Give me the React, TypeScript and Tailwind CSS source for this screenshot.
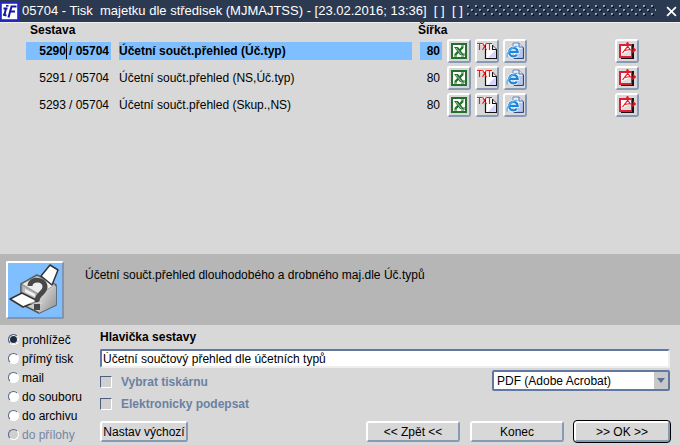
import React, { useState } from 'react';

const reports = [
  { id: '5290', group: '05704', name: 'Účetní součt.přehled (Úč.typ)', width: 80 },
  { id: '5291', group: '05704', name: 'Účetní součt.přehled (NS,Úč.typ)', width: 80 },
  { id: '5293', group: '05704', name: 'Účetní součt.přehled (Skup.,NS)', width: 80 },
];

const outputs = [
  { value: 'prohlizec', label: 'prohlížeč' },
  { value: 'tisk', label: 'přímý tisk' },
  { value: 'mail', label: 'mail' },
  { value: 'soubor', label: 'do souboru' },
  { value: 'archiv', label: 'do archivu' },
  { value: 'priloha', label: 'do přílohy', disabled: true },
];

const options = [
  { id: 'vybrat', label: 'Vybrat tiskárnu' },
  { id: 'podepsat', label: 'Elektronicky podepsat' },
];

const ExcelIcon = () => (
  <svg viewBox="0 0 16 16" className="h-4 w-4" aria-hidden="true">
    <rect x="1" y="1" width="14" height="14" fill="#fff" stroke="#22702b" strokeWidth="2" />
    <path d="M3 4h4l6 8H9z" fill="#22702b" />
    <path d="M12 4L4 12" stroke="#22702b" strokeWidth="2.400" />
    <path d="M5 5l5.500 6.500" stroke="#cfe6d0" strokeWidth=".8" />
    <path d="M10 13h3v-3M3 13h3M10 3h3" fill="none" stroke="#22702b" />
  </svg>
);

const TextIcon = () => (
  <svg viewBox="0 0 20 18" className="h-[18px] w-[20px]" aria-hidden="true">
    <path d="M8.500 3.500h7l4 4v9h-11z" fill="#fff" stroke="#111" strokeWidth="1.200" />
    <path d="M11 15.800L18.500 8v7.800z" fill="#d5d3fa" />
    <path d="M15.500 3.500v4h4" fill="#fff" stroke="#111" strokeWidth="1.200" />
    <path d="M0 1h15v7H9V3H0z" fill="#f4f4f4" />
    <path d="M0 1.500h5M2.500 1.500V8M5.500 1l4 7M9.500 1l-4 7M10 1.500h5M12.500 1.500V8" fill="none" stroke="#f71414" strokeWidth="1.100" />
  </svg>
);

const BrowserIcon = () => (
  <svg viewBox="0 0 18 18" className="h-[18px] w-[18px]" aria-hidden="true">
    <path d="M7 1h6l4 4v11H7z" fill="#e9effc" stroke="#6f88bd" />
    <path d="M11 7h5v8h-7z" fill="#b2c7f2" />
    <path d="M13 1v4h4" fill="#dfe8fa" stroke="#526b9c" />
    <path d="M17.500 5.500v11H8" fill="none" stroke="#33477c" />
    <path d="M3.500 9.800h8.200A4.300 4.300 0 1 0 10.800 12.800" fill="none" stroke="#fff" strokeWidth="3.600" />
    <path d="M3.500 9.800h8.200A4.300 4.300 0 1 0 10.800 12.800" fill="none" stroke="#1d86d8" strokeWidth="2.200" />
    <path d="M1.500 15.500C-1 12 7 3.500 11.500 4.500" fill="none" stroke="#59b3ef" strokeWidth="1.300" />
  </svg>
);

const PdfIcon = () => (
  <svg viewBox="0 0 18 18" className="h-[18px] w-[18px]" aria-hidden="true">
    <path d="M3 2h13v15H3z" fill="#1a1114" />
    <path d="M1 2h13v14H1z" fill="#dc2038" />
    <path d="M3 4h10v10H3z" fill="#dedede" />
    <path d="M3 4h10v4L3 13z" fill="#fff" />
    <path d="M9.500 0v4.500L4.500 11M9.500 4l3 4h5M15 5.500L17.500 8 14 10.500M6.500 8.500l6-1" fill="none" stroke="#f01824" strokeWidth="1.200" />
    <circle cx="9.500" cy="1.500" r="1.200" fill="#f01824" />
  </svg>
);

const PrinterIcon = () => (
  <svg viewBox="0 0 54 54" className="h-[54px] w-[54px]" aria-hidden="true">
    <defs>
      <linearGradient id="printerSide" x1="0" y1="0" x2="1" y2="1">
        <stop offset="0" stopColor="#e9e9e9" />
        <stop offset="1" stopColor="#8c8c8c" />
      </linearGradient>
    </defs>
    <path d="M13 21L29 12l19 10v20L31 50 13 41z" fill="#cdcdcd" stroke="#555" strokeWidth="1.500" strokeLinejoin="round" />
    <path d="M31 32l17-9v19L31 50z" fill="url(#printerSide)" />
    <path d="M14 21l15-8 18 9-16 9z" fill="#ededed" stroke="#8a8a8a" strokeWidth=".7" />
    <path d="M33 13l9-11 8 5-6 15z" fill="#fff" stroke="#333" strokeWidth="1.500" strokeLinejoin="round" />
    <path d="M14 22l17 10v9l-17-9z" fill="#bcbcbc" stroke="#888" strokeWidth=".7" />
    <path d="M17 26l10 5v3l-10-5z" fill="#f2f2f2" />
    <path d="M2 36l12-6 16 8-15 6z" fill="#fff" stroke="#333" strokeWidth="1.500" strokeLinejoin="round" />
    <path d="M22 23c0-8 15-8 15 1 0 6-8 7-8 14" fill="none" stroke="#484848" strokeWidth="5" />
    <path d="M29 41v6" stroke="#484848" strokeWidth="6" />
    <path d="M22 40h12" stroke="#ddd" />
  </svg>
);

const LogoIcon = () => (
  <svg viewBox="0 0 19 19" className="h-[19px] w-[19px] shrink-0" aria-hidden="true">
    <rect x="1" y="1" width="17" height="17" fill="#fff" stroke="#2424e0" strokeWidth="1.600" />
    <path d="M6 6L4.500 13M3.500 6.500h4M8.500 15.500l3-11h5M10.500 9.500h4.500M3 12.500l3.500 1" fill="none" stroke="#1515a8" strokeWidth="2" />
    <path d="M6 3.800h2.500" stroke="#1515a8" strokeWidth="1.600" />
  </svg>
);

const raised = 'rounded-[3px] border-2 border-t-white border-l-white border-r-[#8799b3] border-b-[#8799b3] bg-[#d8d8d8]';

const IconButton = ({ label, children }: { label: string; children: React.ReactNode }) => (
  <button type="button" aria-label={label} className={`${raised} flex h-6 w-6 items-center justify-center`}>
    {children}
  </button>
);

const App: React.FC = () => {
  const [selected, setSelected] = useState('5290');
  const [output, setOutput] = useState('prohlizec');

  return (
    <main className="flex min-h-screen flex-col bg-[#d8d8d8] font-['Liberation_Sans',Arial,sans-serif] text-[12px] leading-4 text-black">
      <header className="flex h-[22px] items-center bg-[#2b3a50] text-white">
        <LogoIcon />
        <h1 className="ml-[3px] text-[13px] whitespace-pre">05704 - Tisk  majetku dle středisek (MJMAJTSS) - [23.02.2016; 13:36]  [ ]  [ ]</h1>
        <svg className="mr-1.5 ml-1 h-3 min-w-0 flex-1" aria-hidden="true">
          <defs>
            <pattern id="bumps" width="8" height="8" patternUnits="userSpaceOnUse">
              <path d="M0 0h2v2H0zM4 4h2v2H4z" fill="#9dabbc" />
              <path d="M1 1h2v2H1zM5 5h2v2H5z" fill="#0d1522" />
              <path d="M1 1h1v1H1zM5 5h1v1H5z" fill="#6a7a8f" />
            </pattern>
          </defs>
          <rect width="100%" height="12" fill="url(#bumps)" />
        </svg>
        <button type="button" aria-label="Zavřít" className="flex h-5 w-[18px] items-center justify-center">
          <svg viewBox="0 0 10 10" className="h-[11px] w-[11px]" aria-hidden="true">
            <path d="M1 1l8 8M9 1L1 9" stroke="#fff" strokeWidth="1.600" />
          </svg>
        </button>
      </header>

      <section className="min-h-[120px] flex-1 border-t border-[#f0f0f0]">
        <table className="w-full table-fixed border-collapse">
          <colgroup>
            <col className="w-[111px]" />
            <col />
            <col className="w-[30px]" />
            <col className="w-[29px]" />
            <col className="w-7" />
            <col className="w-7" />
            <col className="w-[153px]" />
          </colgroup>
          <thead>
            <tr className="text-left leading-[13px]">
              <th className="p-0 pt-px pl-[30px]">Sestava</th>
              <th className="p-0" />
              <th className="p-0 pt-px pl-1.5 whitespace-nowrap" colSpan={2}>Šířka</th>
              <th className="p-0" colSpan={3} />
            </tr>
          </thead>
          <tbody>
            {reports.map((report) => {
              const active = report.id === selected;
              const cell = active ? 'flex h-[18px] items-center bg-[#80bfff] font-bold' : 'flex h-[18px] items-center';
              return (
                <tr key={report.id} className="h-[27px]" onClick={() => setSelected(report.id)}>
                  <td className="p-0 pl-[26px]">
                    <div className={`${cell} justify-end gap-0.5 pr-0.5`}>
                      <span className={active ? 'border-r border-black' : 'border-r border-transparent'}>{report.id}</span>
                      <span>/ {report.group}</span>
                    </div>
                  </td>
                  <td className="p-0 pl-2">
                    <div className={cell}>{report.name}</div>
                  </td>
                  <td className="p-0 pl-2">
                    <div className={`${cell} justify-end pr-0.5`}>{report.width}</div>
                  </td>
                  <td className="p-0 pl-[5px]">
                    <IconButton label="Excel"><ExcelIcon /></IconButton>
                  </td>
                  <td className="p-0 pl-1">
                    <IconButton label="Text"><TextIcon /></IconButton>
                  </td>
                  <td className="p-0 pl-1">
                    <IconButton label="Prohlížeč"><BrowserIcon /></IconButton>
                  </td>
                  <td className="p-0 pl-[88px]">
                    <IconButton label="PDF"><PdfIcon /></IconButton>
                  </td>
                </tr>
              );
            })}
          </tbody>
        </table>
      </section>

      <section className="flex items-start gap-[21px] bg-[#b6b6b6] px-1.5 pt-[7px] pb-1.5">
        <div className="rounded-[2px] border-2 border-t-white border-l-white border-r-[#8294ae] border-b-[#8294ae] bg-[#80bfff]">
          <PrinterIcon />
        </div>
        <p className="pt-1.5">Účetní součt.přehled dlouhodobého a drobného maj.dle Úč.typů</p>
      </section>

      <form className="flex pt-1 pr-2.5 pb-px" onSubmit={(e) => e.preventDefault()}>
        <fieldset className="w-[100px] shrink-0 pt-px pl-2">
          {outputs.map((item) => (
            <label
              key={item.value}
              className={item.disabled ? 'flex h-[19px] items-center gap-[3px] text-[#7587a3]' : 'flex h-[19px] items-center gap-[3px]'}
            >
              <input
                type="radio"
                name="output"
                value={item.value}
                disabled={item.disabled}
                checked={output === item.value}
                onChange={() => setOutput(item.value)}
                className="h-[11px] w-[11px] appearance-none rounded-full border border-t-[#56677f] border-l-[#56677f] border-r-white border-b-white bg-white checked:bg-[#1c2c42] checked:shadow-[inset_0_0_0_1px_white] disabled:bg-[#d0d0d0]"
              />
              {item.label}
            </label>
          ))}
        </fieldset>

        <div className="min-w-0 flex-1">
          <label htmlFor="heading" className="block h-5 font-bold">Hlavička sestavy</label>
          <input
            id="heading"
            type="text"
            defaultValue="Účetní součtový přehled dle účetních typů"
            className="block h-[19px] w-full rounded-[2px] border-2 border-t-[#6078a0] border-l-[#6078a0] border-r-[#eeeeee] border-b-[#eeeeee] bg-white px-px"
          />
          <div className="mt-px flex items-start justify-between">
            <div>
              {options.map((option) => (
                <label key={option.id} htmlFor={option.id} className="flex h-[22px] items-center gap-[9px] pt-1 font-bold text-[#6b81a3]">
                  <input
                    id={option.id}
                    type="checkbox"
                    disabled
                    className="h-3 w-3 appearance-none border border-t-[#4c5f7c] border-l-[#4c5f7c] border-r-white border-b-white bg-[#d0d0d0]"
                  />
                  {option.label}
                </label>
              ))}
            </div>
            <div className="relative mt-px w-[178px]">
              <select aria-label="Formát" className="block h-[21px] w-full appearance-none rounded-[2px] border-2 border-[#6078a0] bg-white pl-[3px]">
                <option>PDF (Adobe Acrobat)</option>
              </select>
              <span className="pointer-events-none absolute top-0.5 right-0.5 flex h-[17px] w-[14px] items-center justify-center bg-[#c8c8c8]">
                <svg viewBox="0 0 8 5" className="h-[5px] w-2" aria-hidden="true">
                  <path d="M0 0h8L4 5z" fill="#56709a" />
                </svg>
              </span>
            </div>
          </div>
          <div className="mt-2 flex gap-2.5">
            <button type="button" className={`${raised} mr-auto h-[21px] w-[88px] leading-none whitespace-nowrap`}>Nastav výchozí</button>
            <button type="button" className={`${raised} h-[21px] w-[94px] leading-none`}>&lt;&lt; Zpět &lt;&lt;</button>
            <button type="button" className={`${raised} h-[21px] w-[94px] leading-none`}>Konec</button>
            <button type="submit" className={`${raised} h-[21px] w-24 leading-none outline outline-black`}>&gt;&gt; OK &gt;&gt;</button>
          </div>
        </div>
      </form>
    </main>
  );
};

export default App;
